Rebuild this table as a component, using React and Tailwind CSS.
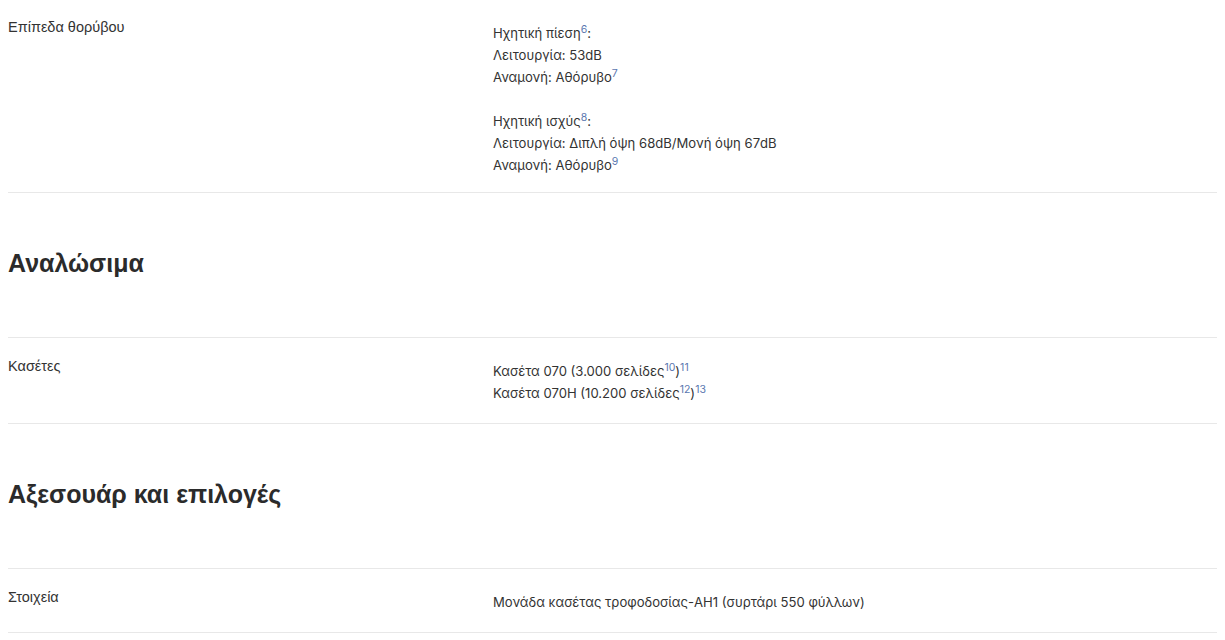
export default function App() {
  const label = "text-[14.5px] leading-[22px] text-[#333333]";
  const labelFont = { fontFamily: '"Liberation Sans", Arial, sans-serif' };
  const valFont = { fontFamily: 'Inter, "Noto Sans", sans-serif' };
  const val = "text-[13.1px] leading-[22px] text-[#333333]";
  const sup = "text-[10.5px] text-[#5b78b0]";
  const h2 = "text-[25px] leading-[30px] font-bold text-[#2b2b2b]";
  return (
    <div className="bg-white min-h-screen">
      <div className="mx-2">
        <div className="flex border-b border-[#e8e8e8] pt-4 pb-4">
          <div className={"w-[485px] shrink-0 " + label} style={labelFont}>Επίπεδα θορύβου</div>
          <div className={"mt-[6px] " + val} style={valFont}>
            Ηχητική πίεση<sup className={sup}>6</sup>:<br />
            Λειτουργία: 53dB<br />
            Αναμονή: Αθόρυβο<sup className={sup}>7</sup>
            <br /><br />
            Ηχητική ισχύς<sup className={sup}>8</sup>:<br />
            Λειτουργία: Διπλή όψη 68dB/Μονή όψη 67dB<br />
            Αναμονή: Αθόρυβο<sup className={sup}>9</sup>
          </div>
        </div>
        <div className="border-b border-[#e8e8e8] pt-[55px] pb-[59px]">
          <h2 className={h2} style={labelFont}>Αναλώσιμα</h2>
        </div>
        <div className="flex border-b border-[#e8e8e8] pt-[17px] pb-[19px]">
          <div className={"w-[485px] shrink-0 " + label} style={labelFont}>Κασέτες</div>
          <div className={"mt-[5px] " + val} style={valFont}>
            Κασέτα 070 (3.000 σελίδες<sup className={sup}>10</sup>)<sup className={sup}>11</sup><br />
            Κασέτα 070H (10.200 σελίδες<sup className={sup}>12</sup>)<sup className={sup}>13</sup>
          </div>
        </div>
        <div className="border-b border-[#e8e8e8] pt-[55px] pb-[59px]">
          <h2 className={h2} style={labelFont}>Αξεσουάρ και επιλογές</h2>
        </div>
        <div className="flex border-b border-[#e8e8e8] pt-[17px] pb-[19px]">
          <div className={"w-[485px] shrink-0 " + label} style={labelFont}>Στοιχεία</div>
          <div className={"mt-[5px] " + val} style={valFont}>
            Μονάδα κασέτας τροφοδοσίας-AH1 (συρτάρι 550 φύλλων)
          </div>
        </div>
      </div>
    </div>
  );
}
